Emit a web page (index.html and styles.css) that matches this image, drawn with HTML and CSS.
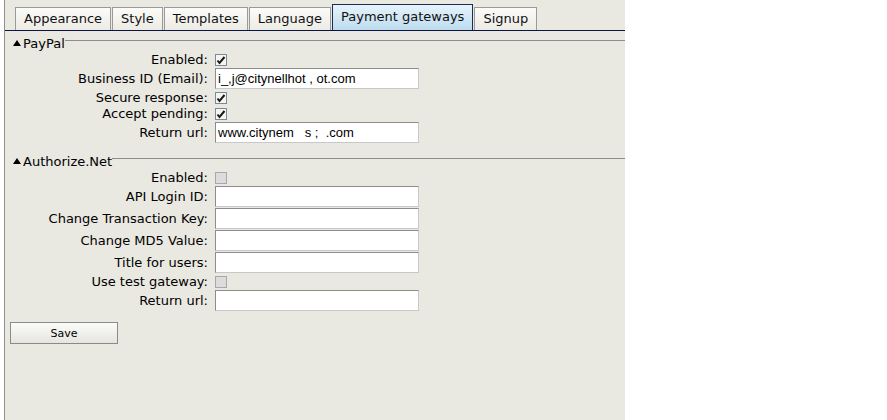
FILE: index.html
```html
<!DOCTYPE html>
<html>
<head>
<meta charset="utf-8">
<link rel="stylesheet" href="styles.css">
</head>
<body>
<div class="panel">
  <div class="tabs">
    <span class="tab">Appearance</span>
    <span class="tab">Style</span>
    <span class="tab">Templates</span>
    <span class="tab">Language</span>
    <span class="tab active">Payment gateways</span>
    <span class="tab">Signup</span>
  </div>

  <div class="legend legend-first"><span class="tri"></span><span class="legend-text">PayPal</span><span class="legend-line"></span></div>
  <div class="row cb-row"><label class="lbl">Enabled:</label><span class="cb checked"><svg viewBox="0 0 12 12" width="12" height="12"><path d="M2.5 6.5 L4.5 9 L9.5 3" fill="none" stroke="#1a1a1a" stroke-width="2"/></svg></span></div>
  <div class="row in-row"><label class="lbl">Business ID (Email):</label><span class="inp">i_,j@citynellhot , ot.com</span></div>
  <div class="row cb-row"><label class="lbl">Secure response:</label><span class="cb checked"><svg viewBox="0 0 12 12" width="12" height="12"><path d="M2.5 6.5 L4.5 9 L9.5 3" fill="none" stroke="#1a1a1a" stroke-width="2"/></svg></span></div>
  <div class="row cb-row"><label class="lbl">Accept pending:</label><span class="cb checked"><svg viewBox="0 0 12 12" width="12" height="12"><path d="M2.5 6.5 L4.5 9 L9.5 3" fill="none" stroke="#1a1a1a" stroke-width="2"/></svg></span></div>
  <div class="row in-row"><label class="lbl">Return url:</label><span class="inp">www.citynem&nbsp;&nbsp; s ;&nbsp; .com</span></div>

  <div class="legend legend-second"><span class="tri"></span><span class="legend-text">Authorize.Net</span><span class="legend-line"></span></div>
  <div class="row cb-row"><label class="lbl">Enabled:</label><span class="cb off"></span></div>
  <div class="row in-row"><label class="lbl">API Login ID:</label><span class="inp"></span></div>
  <div class="row in-row"><label class="lbl">Change Transaction Key:</label><span class="inp"></span></div>
  <div class="row in-row"><label class="lbl">Change MD5 Value:</label><span class="inp"></span></div>
  <div class="row in-row"><label class="lbl">Title for users:</label><span class="inp"></span></div>
  <div class="row cb-row"><label class="lbl">Use test gateway:</label><span class="cb off"></span></div>
  <div class="row in-row"><label class="lbl">Return url:</label><span class="inp"></span></div>

  <div class="actions"><button class="btn">Save</button></div>
</div>
</body>
</html>
```

FILE: styles.css
```css
html, body {
  margin: 0;
  padding: 0;
  background: #ffffff;
}
body {
  width: 887px;
  height: 420px;
  overflow: hidden;
  font-family: "DejaVu Sans", Verdana, sans-serif;
  font-size: 13px;
  color: #000;
}
.panel {
  margin-left: 4px;
  width: 621px;
  height: 420px;
  background: #e9e8e1;
  border-left: 1px solid #8f8f8f;
  box-sizing: border-box;
}
.tabs {
  display: flex;
  align-items: flex-end;
  gap: 1px;
  padding-left: 10px;
  height: 31px;
  box-sizing: border-box;
  border-bottom: 1px solid #0c1440;
}
.tab {
  height: 23px;
  box-sizing: border-box;
  padding: 0 8px;
  font-size: 13px;
  line-height: 22px;
  border: 1px solid #9a9a9a;
  border-bottom: none;
  background: linear-gradient(#fbfbf8, #ecebe5);
  color: #111;
}
.tab.active {
  height: 26px;
  line-height: 24px;
  padding: 0 8px;
  border-color: #1d2b50;
  background: linear-gradient(#e6f3fb, #bcdcef);
}
.legend {
  display: flex;
  height: 16px;
  align-items: center;
}
.legend-first { margin-top: 5px; }
.legend-second { margin-top: 10px; }
.tri {
  width: 0;
  height: 0;
  margin-left: 8px;
  margin-right: 2px;
  border-left: 4px solid transparent;
  border-right: 4px solid transparent;
  border-bottom: 6px solid #000;
  margin-bottom: 2px;
}
.legend-text {
  font-size: 13px;
  line-height: 16px;
}
.legend-line {
  flex: 1;
  align-self: flex-start;
  margin-top: 4px;
  border-top: 1px solid #8d8d8d;
}
.row {
  display: flex;
  align-items: center;
}
.cb-row { height: 16px; }
.in-row { height: 22px; }
.lbl {
  width: 203px;
  text-align: right;
  line-height: 16px;
  white-space: nowrap;
}
.cb {
  width: 12px;
  height: 12px;
  margin-left: 7px;
  box-sizing: border-box;
  border: 1px solid #7b8a99;
  background: #f4f4f0;
  display: flex;
}
.cb svg { display: block; margin: -1px; }
.cb.off {
  background: #dcdcdc;
  border-color: #a8a8a8;
}
.inp {
  margin-left: 7px;
  width: 204px;
  height: 21px;
  box-sizing: border-box;
  border: 1px solid #8c8c8c;
  border-right-color: #c8c8c8;
  border-bottom-color: #c8c8c8;
  background: #fff;
  font-family: "Liberation Sans", Arial, sans-serif;
  font-size: 13px;
  line-height: 19px;
  padding-left: 2px;
  white-space: nowrap;
  overflow: hidden;
}
.in-row .inp { align-self: flex-start; }
.actions {
  margin-top: 10px;
  padding-left: 5px;
}
.btn {
  width: 108px;
  height: 22px;
  box-sizing: border-box;
  border: 1px solid #8a8a8a;
  background: linear-gradient(#fbfbf9, #e6e5df);
  font-family: "DejaVu Sans", Verdana, sans-serif;
  font-size: 11px;
  color: #000;
  padding: 0;
  margin: 0;
}
```
